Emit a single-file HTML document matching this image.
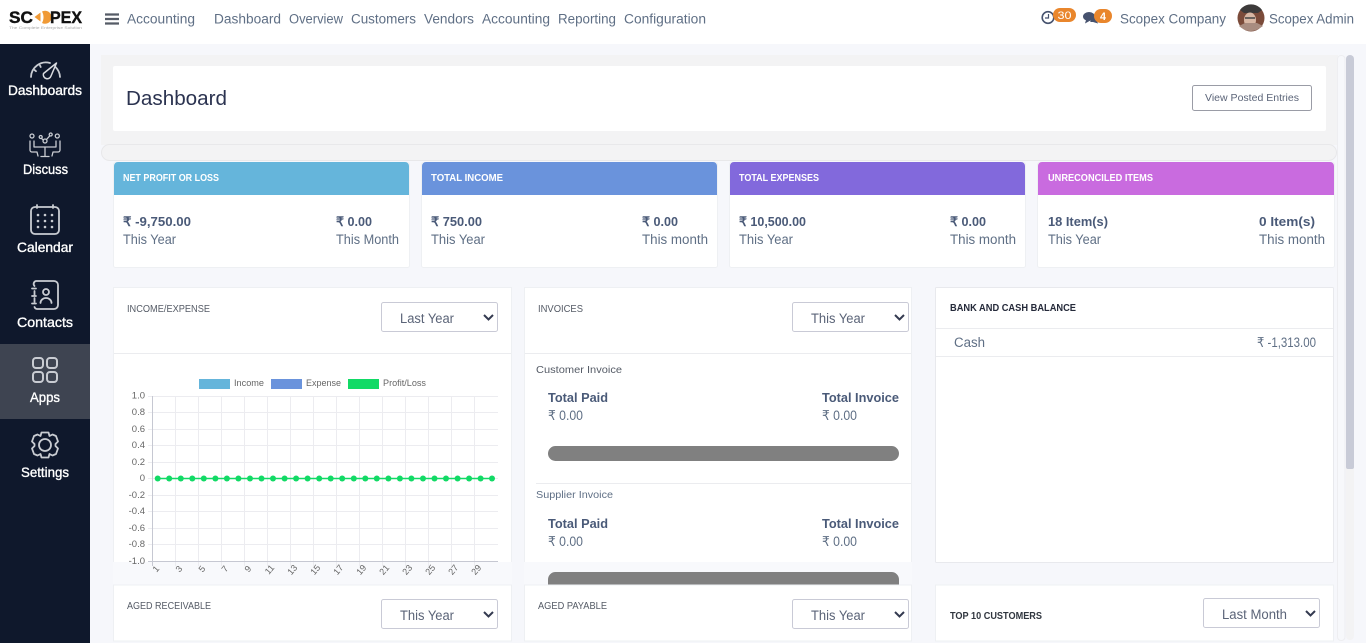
<!DOCTYPE html>
<html lang="en"><head><meta charset="utf-8"><title>Dashboard</title>
<style>
html,body{margin:0;padding:0;width:1366px;height:643px;overflow:hidden;background:#f6f7fb}
svg{display:block;position:absolute;left:0;top:0}
text{font-family:"Liberation Sans",sans-serif;fill:#5f6f85;font-size:13.5px}
.b{font-weight:700;fill:#4a5a78;font-size:13px}
.h{font-weight:700;fill:#fff;font-size:10px}
.s{fill:#fff;font-size:14px;stroke:#fff;stroke-width:.35px}
.l{fill:#555b66;font-size:10.5px}
.d{fill:#30363f;font-size:10px;font-weight:700}
.v{fill:#5b6478;font-size:13.5px}
.a{fill:#666;font-size:9px}
.i{fill:none;stroke:#c9ccd2;stroke-width:1.8;stroke-linecap:round;stroke-linejoin:round}
.sel{fill:#fff;stroke:#c9cad6}
.che{fill:none;stroke:#343a50;stroke-width:2}
.card{fill:#fff;stroke:#eef0f3}
</style></head><body>
<svg width="1366" height="643" viewBox="0 0 1366 643" xmlns="http://www.w3.org/2000/svg">
<rect width="1366" height="643" fill="#f6f7fb"/>
<rect x="0" y="0" width="1366" height="44" fill="#fff"/>
<rect x="101" y="55" width="1237" height="90" fill="#f3f3f4"/>

<!-- top bar -->
<text x="9" y="23" textLength="24" lengthAdjust="spacingAndGlyphs" style="font-size:16.5px;font-weight:700;fill:#111;stroke:#111;stroke-width:.4px">SC</text>
<path d="M34.500 17l6-4.500v9z" fill="#f09a36"/>
<path d="M42 11.500a6.500 6.500 0 1 1 0 11.500c2-3.500 2-8 0-11.500z" fill="#f09a36"/>
<text x="50" y="23" textLength="32" lengthAdjust="spacingAndGlyphs" style="font-size:16.5px;font-weight:700;fill:#111;stroke:#111;stroke-width:.4px">PEX</text>
<text x="9" y="29" textLength="73" lengthAdjust="spacingAndGlyphs" style="font-size:4px;fill:#aaa">The Complete Enterprise Solution</text>
<path d="M105 14.500h14M105 19h14M105 23.500h14" stroke="#555b66" stroke-width="2.200"/>
<text x="127" y="23.500" textLength="68" lengthAdjust="spacingAndGlyphs">Accounting</text>
<text x="214" y="23.500" textLength="67" lengthAdjust="spacingAndGlyphs">Dashboard</text>
<text x="289" y="23.500" textLength="54" lengthAdjust="spacingAndGlyphs">Overview</text>
<text x="351" y="23.500" textLength="65" lengthAdjust="spacingAndGlyphs">Customers</text>
<text x="424" y="23.500" textLength="50" lengthAdjust="spacingAndGlyphs">Vendors</text>
<text x="482" y="23.500" textLength="68" lengthAdjust="spacingAndGlyphs">Accounting</text>
<text x="558" y="23.500" textLength="58" lengthAdjust="spacingAndGlyphs">Reporting</text>
<text x="624" y="23.500" textLength="82" lengthAdjust="spacingAndGlyphs">Configuration</text>

<circle cx="1048" cy="17.500" r="5.800" fill="none" stroke="#46526e" stroke-width="1.600"/><path d="M1048.500 14v4h-3.500" fill="none" stroke="#46526e" stroke-width="1.200"/>
<rect x="1053" y="8" width="23" height="14" rx="7" fill="#e9862c"/>
<text x="1057.500" y="18.800" textLength="14" lengthAdjust="spacingAndGlyphs" style="fill:#fff;font-size:11px">30</text>
<ellipse cx="1089" cy="16.500" rx="6" ry="4.500" fill="#46526e"/><path d="M1086 20l-1 3.500 4.500-2.500z" fill="#46526e"/><path d="M1093 18h4v3l1 2.500-5-1.500h-3z" fill="#46526e"/>
<rect x="1094" y="9" width="18" height="14" rx="7" fill="#e9862c"/>
<text x="1100" y="19.800" textLength="6" lengthAdjust="spacingAndGlyphs" style="fill:#fff;font-size:11px;font-weight:700">4</text>
<text x="1120" y="23.500" textLength="106" lengthAdjust="spacingAndGlyphs">Scopex Company</text>
<circle cx="1251" cy="18" r="13.500" fill="#7b4b3a"/>
<path d="M1240 10a13.500 13.500 0 0 1 22 0l-4 3h-14z" fill="#3c3a3a"/>
<ellipse cx="1250" cy="20" rx="6" ry="7.500" fill="#d8b7a4"/><path d="M1245 18h10" stroke="#444" stroke-width="1.500"/><path d="M1239 26q11 10 24 0l-6-3h-12z" fill="#a88c80"/>
<text x="1269" y="23.500" textLength="85" lengthAdjust="spacingAndGlyphs">Scopex Admin</text>

<!-- sidebar -->
<rect x="0" y="44" width="90" height="599" fill="#0f182c"/>
<rect x="0" y="344" width="90" height="75" fill="#3e4451"/>
<path class="i" d="M31 77a15 15 0 0 1 19-14M55.500 67a15 15 0 0 1 4.500 10M34.500 70l1.500 1.200M40 65.500l.7 1.500"/>
<path d="M43.500 73.500L56.500 63 51 76a3.700 3.700 0 0 1-7.500-2.500z" fill="none" stroke="#d9dbe0" stroke-width="1.500" stroke-linejoin="round"/>
<text class="s" x="8" y="95" textLength="74" lengthAdjust="spacingAndGlyphs">Dashboards</text>
<g class="i" style="stroke-width:1.300">
<circle cx="32" cy="136" r="2"/><circle cx="45" cy="141" r="2"/><circle cx="50.700" cy="134.500" r="1.500"/><circle cx="40.700" cy="137" r="1.500"/><circle cx="57.300" cy="136" r="2"/>
<path d="M41.500 138.500l2 1.500M46.500 139.500l3.300-3.700M30 141v9a2 2 0 0 0 2 2h5l1 4M34 141v6h6M60 141v9a2 2 0 0 1-2 2h-5l-1 4M56 141v6h-6M40 147h10M45 147v9M41 156.500h8"/>
</g>
<text class="s" x="23" y="174" textLength="45" lengthAdjust="spacingAndGlyphs">Discuss</text>
<g class="i">
<rect x="31" y="207" width="28" height="27" rx="4"/><path d="M37 205v3M53 205v3"/>
<path d="M38 215h.01M45 215h.01M52 215h.01M38 221h.01M45 221h.01M52 221h.01M38 227h.01M45 227h.01M52 227h.01" stroke-width="2.600"/>
</g>
<text class="s" x="17" y="252" textLength="56" lengthAdjust="spacingAndGlyphs">Calendar</text>
<g class="i">
<path d="M36 281h18a4 4 0 0 1 4 4v20a4 4 0 0 1-4 4H37a3 3 0 0 1-2.500-2M34.500 286a3 3 0 0 1 1.500-5M34.500 291v4M34.500 298v4"/>
<path d="M32 288.500h4M32 296h4M32 303.500h4"/>
<circle cx="46" cy="292" r="3"/><path d="M40.500 303a5.500 5 0 0 1 11 0"/>
</g>
<text class="s" x="17" y="327" textLength="56" lengthAdjust="spacingAndGlyphs">Contacts</text>
<g fill="none" stroke="#c9ccd2" stroke-width="2">
<rect x="33" y="358" width="10" height="10" rx="3"/><rect x="47" y="358" width="10" height="10" rx="3"/>
<rect x="33" y="372" width="10" height="10" rx="3"/><rect x="47" y="372" width="10" height="10" rx="3"/>
</g>
<text class="s" x="30" y="402" textLength="30" lengthAdjust="spacingAndGlyphs">Apps</text>
<g class="i">
<circle cx="45" cy="445" r="6"/>
<path d="M41.500 432.500h7l1 3.500 3-1.500 3.500 1.500 2 5.500-2.500 2.500v2l2.500 2.500-2 5.500-3.500 1.500-3-1.500-1 3.500h-7l-1-3.500-3 1.500-3.500-1.500-2-5.500 2.500-2.500v-2l-2.500-2.500 2-5.500 3.500-1.500 3 1.500z"/>
</g>
<text class="s" x="21" y="477" textLength="48" lengthAdjust="spacingAndGlyphs">Settings</text>

<!-- scroll tracks -->
<rect x="1337.500" y="55.500" width="7.500" height="585" rx="3.500" fill="#f7f8fb" stroke="#eeeef1"/>
<rect x="1346" y="55" width="8" height="585" rx="4" fill="#f3f3f4"/>
<path d="M1346 59a4 4 0 0 1 8 0v408a2 2 0 0 1-2 2h-4a2 2 0 0 1-2-2z" fill="#c8cbd7"/>

<!-- page header -->
<rect x="113" y="66" width="1213" height="65" rx="2" fill="#fff"/>
<text x="126" y="105" textLength="101" lengthAdjust="spacingAndGlyphs" style="font-size:20px;fill:#2b3350">Dashboard</text>
<rect x="1192.500" y="85.500" width="119" height="25" rx="2" fill="#fff" stroke="#9a9ca6"/>
<text x="1205" y="101" textLength="94" lengthAdjust="spacingAndGlyphs" style="font-size:10px;fill:#5b6478">View Posted Entries</text>
<rect x="101.500" y="144.500" width="1235" height="16" rx="8" fill="#f3f3f4" stroke="#e8e8ea"/>

<!-- stat cards -->
<g>
<rect class="card" x="113.500" y="162.500" width="296" height="105" rx="2"/>
<path d="M114 166a4 4 0 0 1 4-4h287a4 4 0 0 1 4 4v29H114z" fill="#65b5db"/>
<text class="h" x="123" y="181" textLength="96" lengthAdjust="spacingAndGlyphs">NET PROFIT OR LOSS</text>
<text class="b" x="123" y="226" textLength="68" lengthAdjust="spacingAndGlyphs">₹ -9,750.00</text>
<text class="b" x="336" y="226" textLength="36" lengthAdjust="spacingAndGlyphs">₹ 0.00</text>
<text x="123" y="244" textLength="53" lengthAdjust="spacingAndGlyphs">This Year</text>
<text x="336" y="244" textLength="63" lengthAdjust="spacingAndGlyphs">This Month</text>

<rect class="card" x="421.500" y="162.500" width="296" height="105" rx="2"/>
<path d="M422 166a4 4 0 0 1 4-4h287a4 4 0 0 1 4 4v29H422z" fill="#6a93dc"/>
<text class="h" x="431" y="181" textLength="72" lengthAdjust="spacingAndGlyphs">TOTAL INCOME</text>
<text class="b" x="431" y="226" textLength="51" lengthAdjust="spacingAndGlyphs">₹ 750.00</text>
<text class="b" x="642" y="226" textLength="36" lengthAdjust="spacingAndGlyphs">₹ 0.00</text>
<text x="431" y="244" textLength="54" lengthAdjust="spacingAndGlyphs">This Year</text>
<text x="642" y="244" textLength="66" lengthAdjust="spacingAndGlyphs">This month</text>

<rect class="card" x="729.500" y="162.500" width="296" height="105" rx="2"/>
<path d="M730 166a4 4 0 0 1 4-4h287a4 4 0 0 1 4 4v29H730z" fill="#8269dc"/>
<text class="h" x="739" y="181" textLength="80" lengthAdjust="spacingAndGlyphs">TOTAL EXPENSES</text>
<text class="b" x="739" y="226" textLength="67" lengthAdjust="spacingAndGlyphs">₹ 10,500.00</text>
<text class="b" x="950" y="226" textLength="36" lengthAdjust="spacingAndGlyphs">₹ 0.00</text>
<text x="739" y="244" textLength="54" lengthAdjust="spacingAndGlyphs">This Year</text>
<text x="950" y="244" textLength="66" lengthAdjust="spacingAndGlyphs">This month</text>

<rect class="card" x="1037.500" y="162.500" width="297" height="105" rx="2"/>
<path d="M1038 166a4 4 0 0 1 4-4h288a4 4 0 0 1 4 4v29h-296z" fill="#c96bdf"/>
<text class="h" x="1048" y="181" textLength="105" lengthAdjust="spacingAndGlyphs">UNRECONCILED ITEMS</text>
<text class="b" x="1048" y="226" textLength="60" lengthAdjust="spacingAndGlyphs">18 Item(s)</text>
<text class="b" x="1259" y="226" textLength="56" lengthAdjust="spacingAndGlyphs">0 Item(s)</text>
<text x="1048" y="244" textLength="53" lengthAdjust="spacingAndGlyphs">This Year</text>
<text x="1259" y="244" textLength="66" lengthAdjust="spacingAndGlyphs">This month</text>
</g>

<!-- income/expense -->
<rect class="card" x="113.500" y="287.500" width="398" height="275"/>
<rect x="113" y="562" width="399" height="23" fill="#f8f9fc"/>
<text class="l" x="127" y="312" textLength="83" lengthAdjust="spacingAndGlyphs">INCOME/EXPENSE</text>
<rect class="sel" x="381.500" y="302.500" width="116" height="29" rx="2"/>
<text class="v" x="400" y="323" textLength="54" lengthAdjust="spacingAndGlyphs">Last Year</text>
<path class="che" d="M484 315l4.500 4.500 4.500-4.500"/>
<path d="M114 353.500h397" stroke="#ebecef"/>

<rect x="199" y="379" width="31" height="10" fill="#65b5db"/>
<text class="a" x="234" y="386" textLength="30" lengthAdjust="spacingAndGlyphs">Income</text>
<rect x="271" y="379" width="31" height="10" fill="#6a93dc"/>
<text class="a" x="306" y="386" textLength="35" lengthAdjust="spacingAndGlyphs">Expense</text>
<rect x="348" y="379" width="31" height="10" fill="#12da66"/>
<text class="a" x="383" y="386" textLength="43" lengthAdjust="spacingAndGlyphs">Profit/Loss</text>

<g stroke="#ececf0" stroke-width="1">
<path d="M148 396.500h350M148 412.500h350M148 429.500h350M148 445.500h350M148 462.500h350M148 478.500h350M148 495.500h350M148 511.500h350M148 528.500h350M148 544.500h350"/>
<path d="M175.500 396v170M198.500 396v170M221.500 396v170M244.500 396v170M267.500 396v170M290.500 396v170M313.500 396v170M336.500 396v170M359.500 396v170M382.500 396v170M405.500 396v170M428.500 396v170M451.500 396v170M474.500 396v170"/>
</g>
<path d="M152.500 396v170M148 561.500h350" stroke="#c6c8d2"/>
<g>
<text x="145" y="398.500" text-anchor="end" style="font-size:9.500px;fill:#666">1.0</text>
<text x="145" y="415" text-anchor="end" style="font-size:9.500px;fill:#666">0.8</text>
<text x="145" y="432" text-anchor="end" style="font-size:9.500px;fill:#666">0.6</text>
<text x="145" y="448" text-anchor="end" style="font-size:9.500px;fill:#666">0.4</text>
<text x="145" y="465" text-anchor="end" style="font-size:9.500px;fill:#666">0.2</text>
<text x="145" y="481" text-anchor="end" style="font-size:9.500px;fill:#666">0</text>
<text x="145" y="498" text-anchor="end" style="font-size:9.500px;fill:#666">-0.2</text>
<text x="145" y="514" text-anchor="end" style="font-size:9.500px;fill:#666">-0.4</text>
<text x="145" y="531" text-anchor="end" style="font-size:9.500px;fill:#666">-0.6</text>
<text x="145" y="547" text-anchor="end" style="font-size:9.500px;fill:#666">-0.8</text>
<text x="145" y="564" text-anchor="end" style="font-size:9.500px;fill:#666">-1.0</text>
</g>
<g>
<text transform="translate(155 570) rotate(-50)" text-anchor="end" x="4" y="3" class="a">1</text>
<text transform="translate(178 570) rotate(-50)" text-anchor="end" x="4" y="3" class="a">3</text>
<text transform="translate(201 570) rotate(-50)" text-anchor="end" x="4" y="3" class="a">5</text>
<text transform="translate(224 570) rotate(-50)" text-anchor="end" x="4" y="3" class="a">7</text>
<text transform="translate(247 570) rotate(-50)" text-anchor="end" x="4" y="3" class="a">9</text>
<text transform="translate(270 569) rotate(-50)" text-anchor="end" x="4" y="3" class="a">11</text>
<text transform="translate(293 569) rotate(-50)" text-anchor="end" x="4" y="3" class="a">13</text>
<text transform="translate(316 569) rotate(-50)" text-anchor="end" x="4" y="3" class="a">15</text>
<text transform="translate(339 569) rotate(-50)" text-anchor="end" x="4" y="3" class="a">17</text>
<text transform="translate(362 569) rotate(-50)" text-anchor="end" x="4" y="3" class="a">19</text>
<text transform="translate(385 569) rotate(-50)" text-anchor="end" x="4" y="3" class="a">21</text>
<text transform="translate(408 569) rotate(-50)" text-anchor="end" x="4" y="3" class="a">23</text>
<text transform="translate(431 569) rotate(-50)" text-anchor="end" x="4" y="3" class="a">25</text>
<text transform="translate(454 569) rotate(-50)" text-anchor="end" x="4" y="3" class="a">27</text>
<text transform="translate(477 569) rotate(-50)" text-anchor="end" x="4" y="3" class="a">29</text>
</g>
<path d="M157.500 478.500H492" stroke="#12da66" stroke-width="1.500"/>
<g fill="#12da66">
<circle cx="157.700" cy="478.500" r="3"/><circle cx="169.200" cy="478.500" r="3"/><circle cx="180.800" cy="478.500" r="3"/><circle cx="192.300" cy="478.500" r="3"/><circle cx="203.800" cy="478.500" r="3"/><circle cx="215.400" cy="478.500" r="3"/><circle cx="226.900" cy="478.500" r="3"/><circle cx="238.400" cy="478.500" r="3"/><circle cx="250" cy="478.500" r="3"/><circle cx="261.500" cy="478.500" r="3"/>
<circle cx="273" cy="478.500" r="3"/><circle cx="284.600" cy="478.500" r="3"/><circle cx="296.100" cy="478.500" r="3"/><circle cx="307.600" cy="478.500" r="3"/><circle cx="319.200" cy="478.500" r="3"/><circle cx="330.700" cy="478.500" r="3"/><circle cx="342.200" cy="478.500" r="3"/><circle cx="353.800" cy="478.500" r="3"/><circle cx="365.300" cy="478.500" r="3"/><circle cx="376.800" cy="478.500" r="3"/>
<circle cx="388.400" cy="478.500" r="3"/><circle cx="399.900" cy="478.500" r="3"/><circle cx="411.400" cy="478.500" r="3"/><circle cx="423" cy="478.500" r="3"/><circle cx="434.500" cy="478.500" r="3"/><circle cx="446" cy="478.500" r="3"/><circle cx="457.600" cy="478.500" r="3"/><circle cx="469.100" cy="478.500" r="3"/><circle cx="480.600" cy="478.500" r="3"/><circle cx="492" cy="478.500" r="3"/>
</g>

<!-- invoices -->
<rect class="card" x="524.500" y="287.500" width="387" height="275"/>
<rect x="524" y="562" width="388" height="23" fill="#f8f9fc"/>
<text class="l" x="538" y="312" textLength="45" lengthAdjust="spacingAndGlyphs">INVOICES</text>
<rect class="sel" x="792.500" y="302.500" width="116" height="29" rx="2"/>
<text class="v" x="811" y="323" textLength="54" lengthAdjust="spacingAndGlyphs">This Year</text>
<path class="che" d="M895 315l4.500 4.500 4.500-4.500"/>
<path d="M525 353.500h386" stroke="#ebecef"/>
<text x="536" y="373" textLength="86" lengthAdjust="spacingAndGlyphs" style="font-size:10.500px;fill:#555b66">Customer Invoice</text>
<text class="b" x="548" y="402" textLength="60" lengthAdjust="spacingAndGlyphs">Total Paid</text>
<text class="b" x="822" y="402" textLength="77" lengthAdjust="spacingAndGlyphs">Total Invoice</text>
<text x="548" y="420" textLength="35" lengthAdjust="spacingAndGlyphs">₹ 0.00</text>
<text x="822" y="420" textLength="35" lengthAdjust="spacingAndGlyphs">₹ 0.00</text>
<rect x="548" y="446" width="351" height="15" rx="7.500" fill="#808080"/>
<path d="M536 483.500h375" stroke="#ebecef"/>
<text x="536" y="498" textLength="77" lengthAdjust="spacingAndGlyphs" style="font-size:10.500px;fill:#5f6f85">Supplier Invoice</text>
<text class="b" x="548" y="528" textLength="60" lengthAdjust="spacingAndGlyphs">Total Paid</text>
<text class="b" x="822" y="528" textLength="77" lengthAdjust="spacingAndGlyphs">Total Invoice</text>
<text x="548" y="546" textLength="35" lengthAdjust="spacingAndGlyphs">₹ 0.00</text>
<text x="822" y="546" textLength="35" lengthAdjust="spacingAndGlyphs">₹ 0.00</text>
<rect x="548" y="572" width="351" height="24" rx="7.500" fill="#808080"/>

<!-- bank -->
<rect class="card" x="935.500" y="287.500" width="398" height="275" rx="1" style="stroke:#e8e9ed"/>
<text class="d" x="950" y="311" textLength="126" lengthAdjust="spacingAndGlyphs" style="fill:#252a3a">BANK AND CASH BALANCE</text>
<path d="M936 328.500h397M936 356.500h397" stroke="#ebecef"/>
<text x="954" y="347" textLength="31" lengthAdjust="spacingAndGlyphs">Cash</text>
<text x="1257" y="347" textLength="59" lengthAdjust="spacingAndGlyphs">₹ -1,313.00</text>

<!-- bottom row -->
<rect class="card" x="113.500" y="585" width="398" height="56"/>
<text class="l" x="127" y="609" textLength="84" lengthAdjust="spacingAndGlyphs">AGED RECEIVABLE</text>
<rect class="sel" x="381.500" y="599.500" width="116" height="29" rx="2"/>
<text class="v" x="400" y="620" textLength="54" lengthAdjust="spacingAndGlyphs">This Year</text>
<path class="che" d="M484 612l4.500 4.500 4.500-4.500"/>

<rect class="card" x="524.500" y="585" width="387" height="56"/>
<text class="l" x="538" y="609" textLength="69" lengthAdjust="spacingAndGlyphs">AGED PAYABLE</text>
<rect class="sel" x="792.500" y="599.500" width="116" height="29" rx="2"/>
<text class="v" x="811" y="620" textLength="54" lengthAdjust="spacingAndGlyphs">This Year</text>
<path class="che" d="M895 612l4.500 4.500 4.500-4.500"/>

<rect class="card" x="935.500" y="585" width="398" height="56"/>
<text class="d" x="950" y="619" textLength="92" lengthAdjust="spacingAndGlyphs">TOP 10 CUSTOMERS</text>
<rect class="sel" x="1203.500" y="598.500" width="116" height="29" rx="2"/>
<text class="v" x="1222" y="619" textLength="65" lengthAdjust="spacingAndGlyphs">Last Month</text>
<path class="che" d="M1306 611l4.500 4.500 4.500-4.500"/>
</svg>
</body></html>
